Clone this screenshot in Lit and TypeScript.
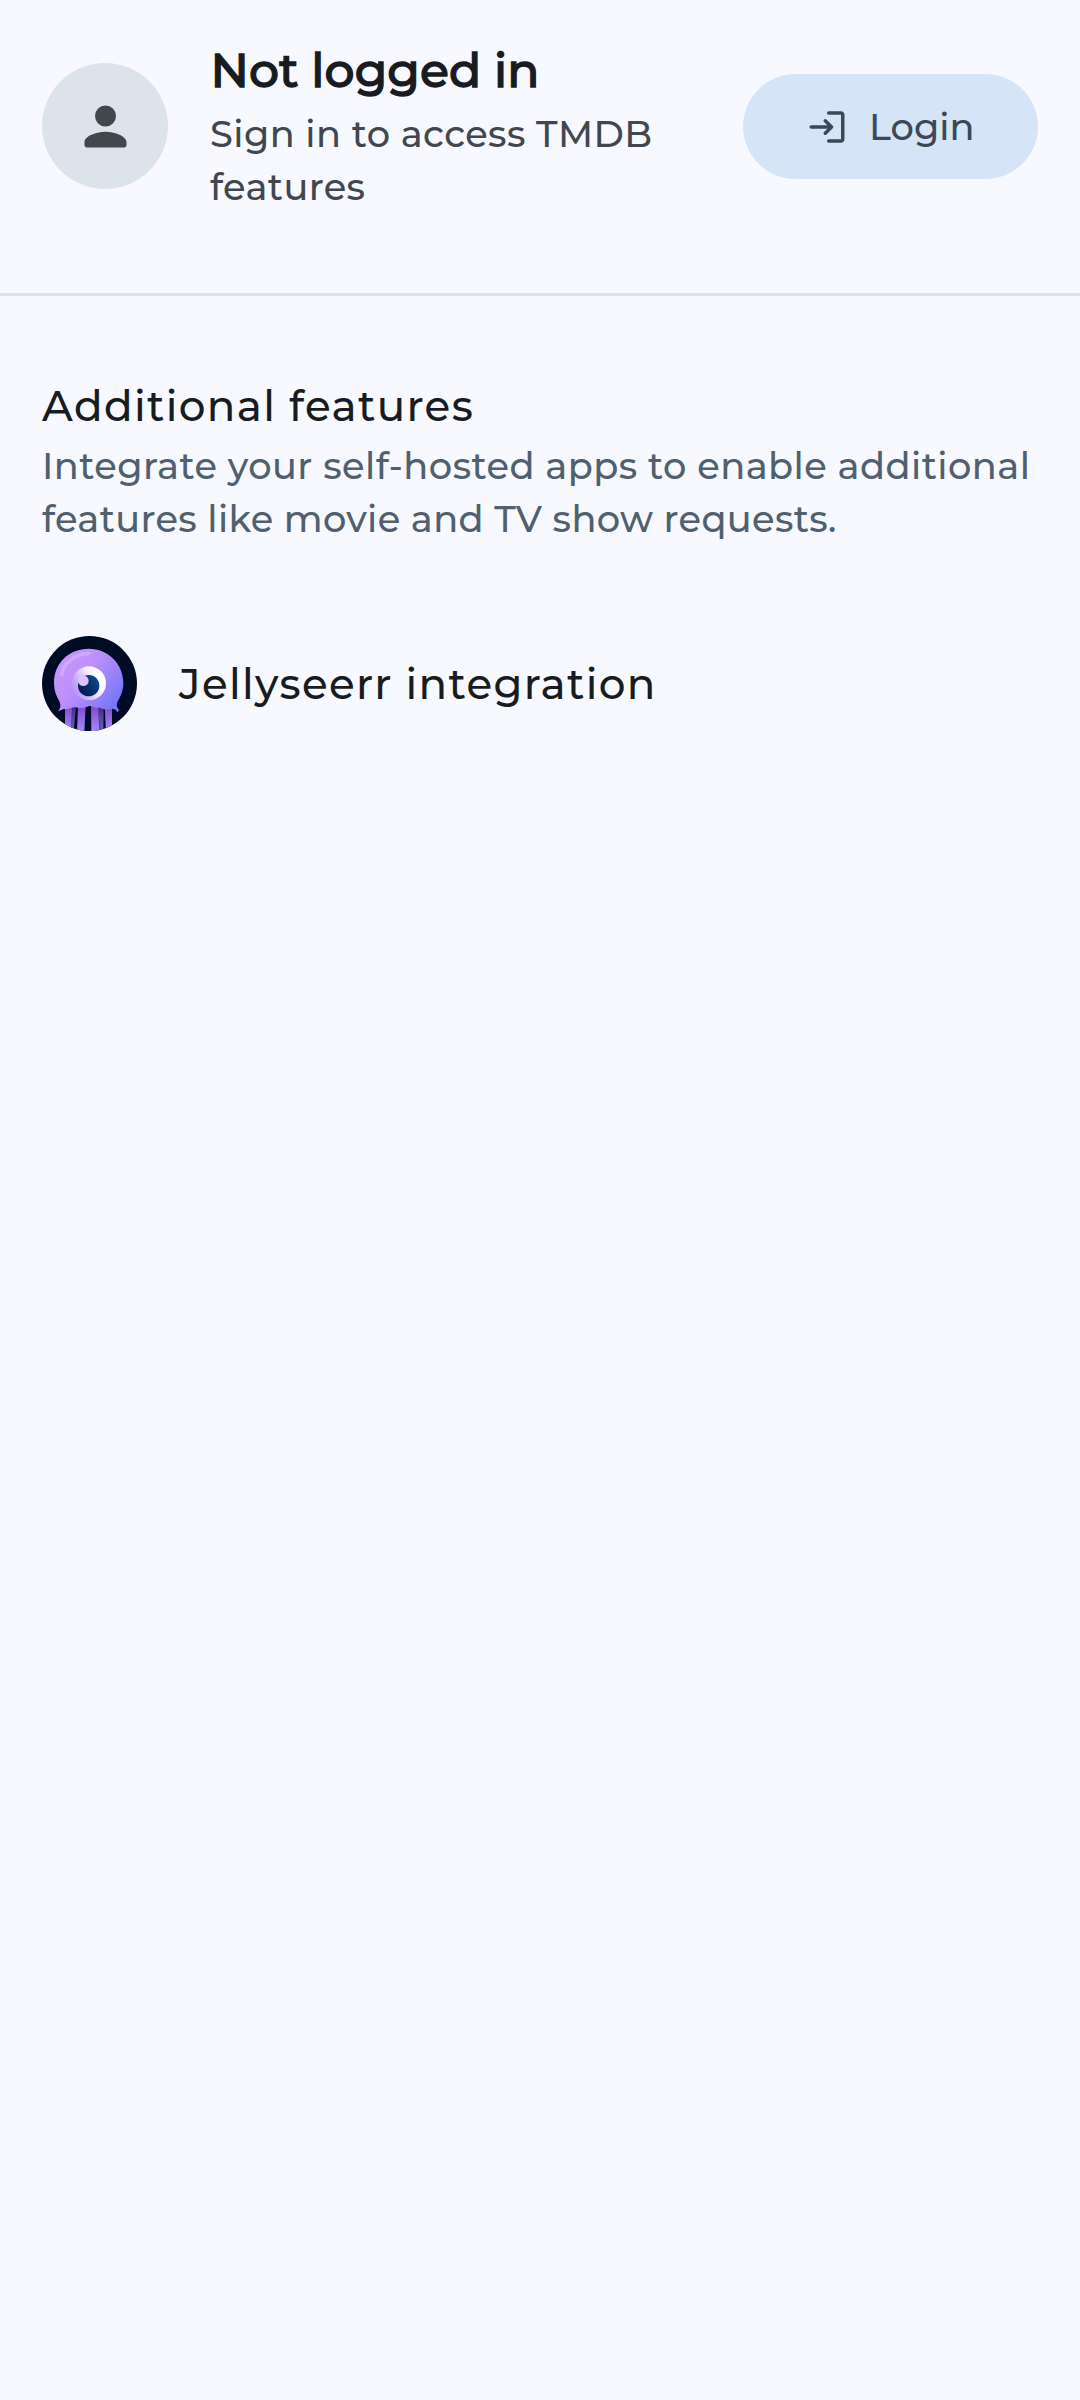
import { LitElement, html, css, svg } from "lit";
import { customElement } from "lit/decorators.js";

const jellyfish = svg`
  <defs>
    <linearGradient id="bell" gradientUnits="userSpaceOnUse" x1="110" y1="110" x2="270" y2="235">
      <stop offset="0" stop-color="#c395fc"/><stop offset=".35" stop-color="#bb8ffb"/><stop offset="1" stop-color="#7274f8"/>
    </linearGradient>
    <linearGradient id="eye" gradientUnits="userSpaceOnUse" x1="126" y1="190" x2="205" y2="150">
      <stop offset="0" stop-color="#b98ffb"/><stop offset=".3" stop-color="#cfb0fb"/><stop offset=".7" stop-color="#f1e9fe"/><stop offset="1" stop-color="#ffffff"/>
    </linearGradient>
    <linearGradient id="pupil" gradientUnits="userSpaceOnUse" x1="150" y1="205" x2="200" y2="165">
      <stop offset="0" stop-color="#05184a"/><stop offset="1" stop-color="#0a4585"/>
    </linearGradient>
    <linearGradient id="leg" x1="0" y1="0" x2="0" y2="1">
      <stop offset="0" stop-color="#8348cf"/><stop offset="1" stop-color="#a58bfb"/>
    </linearGradient>
    <linearGradient id="legBack" x1="0" y1="0" x2="0" y2="1">
      <stop offset="0" stop-color="#472a8d"/><stop offset="1" stop-color="#6f63bd"/>
    </linearGradient>
    <clipPath id="disc"><circle cx="178.500" cy="175.500" r="142.500"/></clipPath>
  </defs>
  <g clip-path="url(#disc)">
    <rect x="36" y="33" width="285" height="285" fill="#000b25"/>
    <path d="M124 245h14l-7 75h-8zM205 245h16l-1 75h-11z" fill="url(#legBack)"/>
    <path d="M105 243h21l-4 75h-17zM144 243h23l-4 77h-22zM183 243h22l3 77h-24zM224 243h22l0 77h-18z" fill="url(#leg)"/>
    <path d="M84 259C92 250 93 242 89 231C78 212 72 195 72 174C72 112 119 71 176 71C236 71 280 118 280 174C280 196 273 213 262 231C259 240 260 247 268 256L262 262C260 257 256 252 248 251C238 252 232 256 224 253C215 250 210 248 204 248C196 250 192 246 184 243C174 242 168 248 158 249C146 250 140 246 132 247C122 249 114 254 104 252C97 253 92 256 84 259Z" fill="url(#bell)"/>
    <path d="M95 150C100 115 132 86 177 85" fill="none" stroke="#d6b5fd" stroke-width="11" stroke-linecap="round" opacity=".6"/>
    <ellipse cx="177" cy="175" rx="51" ry="51" fill="url(#eye)"/>
    <circle cx="176" cy="182" r="32" fill="url(#pupil)"/>
    <circle cx="160" cy="167" r="16" fill="#dac4fb"/>
  </g>`;

@customElement("app-root")
export class AppRoot extends LitElement {
  static styles = css`
    :host { display: block; min-height: 2400px; background: #f8f9ff; color: #181c20; font-family: Montserrat, Inter, sans-serif; font-weight: 500; }
    * { box-sizing: border-box; }
    .account { display: flex; align-items: center; height: 296px; padding: 0 42px 41px; border-bottom: 3px solid #dde3ea; }
    .avatar { flex: none; display: grid; place-items: center; width: 126px; height: 126px; border-radius: 50%; background: #dde3ea; color: #42474e; }
    .avatar svg { width: 63px; height: 63px; }
    .who { flex: 1; padding: 0 0 0 42px; white-space: nowrap; }
    .title { margin: 0 0 4.5px; padding-left: .5px; font-size: 47.25px; line-height: 63px; font-weight: 500; letter-spacing: .05px; -webkit-text-stroke: 1.3px currentColor; }
    .sub, .desc { margin: 0; font-size: 36.75px; line-height: 53px; letter-spacing: .46px; }
    .sub { color: #42474e; letter-spacing: .4px; }
    .login { flex: none; display: flex; align-items: center; width: 295px; height: 105px; padding: 0 0 0 63px; border: 0; border-radius: 53px; background: #d5e4f7; color: #3a4857; font: inherit; font-size: 36.75px; letter-spacing: 0; }
    .login svg { width: 42px; height: 42px; margin: 1px 21px 0 0; }
    .section { padding: 78.500px 42px 0; white-space: nowrap; }
    .heading { margin: 0 0 1.5px; font-size: 42px; line-height: 63px; font-weight: 500; letter-spacing: 1.38px; }
    .desc { color: #50606f; }
    .tight { letter-spacing: .36px; }
    .row { display: flex; align-items: center; gap: 42px; height: 95px; margin: 91px 42px 0; font-size: 42px; letter-spacing: 1.34px; }
    .row svg { width: 95px; height: 95px; }
  `;

  render() {
    return html`
      <header class="account">
        <div class="avatar"><svg viewBox="0 0 24 24" fill="currentColor"><path d="M12 12a4 4 0 1 0 0-8 4 4 0 0 0 0 8zm0 2c-2.670 0-8 1.340-8 4v1c0 .55.45 1 1 1h14c.55 0 1-.45 1-1v-1c0-2.660-5.330-4-8-4z"/></svg></div>
        <div class="who">
          <h1 class="title">Not logged in</h1>
          <p class="sub">Sign in to access TMDB<br>features</p>
        </div>
        <button class="login"><svg viewBox="0 0 24 24" fill="currentColor"><path d="M10.300 7.700c-.39.39-.39 1.010 0 1.400l1.900 1.900H3c-.55 0-1 .45-1 1s.45 1 1 1h9.200l-1.900 1.900c-.39.39-.39 1.010 0 1.400.39.39 1.010.39 1.400 0l3.590-3.590c.39-.39.39-1.020 0-1.410L11.700 7.700c-.39-.39-1.010-.39-1.400 0zM20 19h-7c-.55 0-1 .45-1 1s.45 1 1 1h7c1.100 0 2-.9 2-2V5c0-1.100-.9-2-2-2h-7c-.55 0-1 .45-1 1s.45 1 1 1h7v14z"/></svg><span>Login</span></button>
      </header>
      <section class="section">
        <h2 class="heading">Additional features</h2>
        <p class="desc">Integrate your self-hosted apps to enable additional<br><span class="tight">features like movie and TV show requests.</span></p>
      </section>
      <div class="row"><svg viewBox="36 33 285 285">${jellyfish}</svg><span>Jellyseerr integration</span></div>
    `;
  }
}
